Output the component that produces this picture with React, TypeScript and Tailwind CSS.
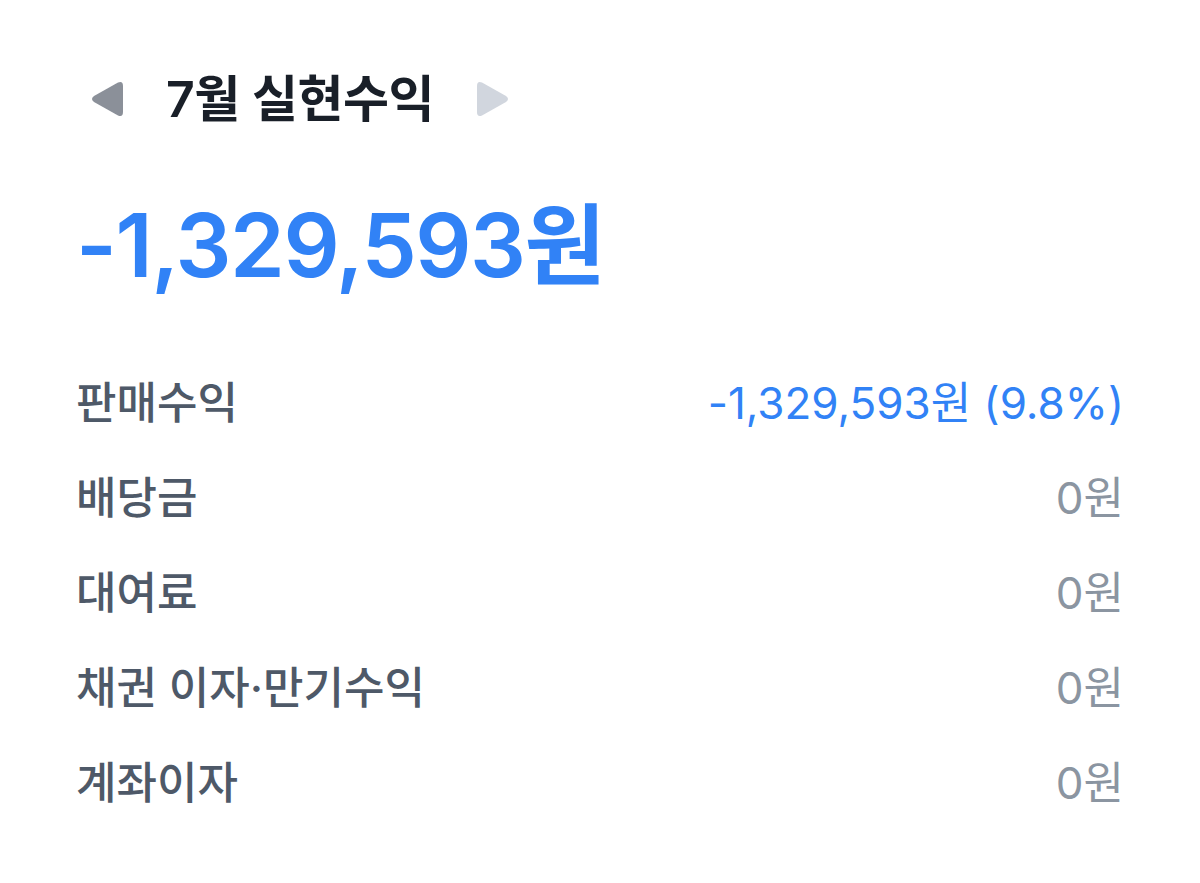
import { ReactNode } from "react";

const font = { fontFamily: '"Inter", "Noto Sans CJK KR", sans-serif' };

type Row = { label: string; value: ReactNode; accent?: boolean };

const rows: Row[] = [
  { label: "판매수익", value: "-1,329,593원 (9.8%)", accent: true },
  { label: "배당금", value: "0원" },
  { label: "대여료", value: "0원" },
  { label: "채권 이자·만기수익", value: "0원" },
  { label: "계좌이자", value: "0원" },
];

function Arrow({ dir, color }: { dir: "left" | "right"; color: string }) {
  return (
    <svg width="34" height="38" viewBox="0 0 34 38" className="shrink-0">
      {dir === "left" ? (
        <path d="M28 2.5 Q33 0.5 33 6 L33 32 Q33 37.5 28 35.5 L4 22 Q0 19 4 16 Z" fill={color} />
      ) : (
        <path d="M6 2.5 Q1 0.5 1 6 L1 32 Q1 37.5 6 35.5 L30 22 Q34 19 30 16 Z" fill={color} />
      )}
    </svg>
  );
}

export default function App() {
  return (
    <div className="min-h-[883px] w-[1200px] bg-white px-[76px] pt-[74px]" style={font}>
      <div className="flex items-center">
        <div className="ml-[14px]"><Arrow dir="left" color="#8b9099" /></div>
        <h1 className="ml-[42px] text-[50px] font-semibold leading-none tracking-[-0.5px] text-[#191f28]">7월 실현수익</h1>
        <div className="ml-[42px]"><Arrow dir="right" color="#d1d6de" /></div>
      </div>

      <div className="mt-[77px] text-[88px] font-semibold leading-none tracking-[-1.5px] text-[#3182f6]">
        -1,329,593원
      </div>

      <div className="mt-[66px] flex flex-col">
        {rows.map((r) => (
          <div key={r.label} className="flex h-[95px] items-center justify-between">
            <span className="text-[44px] font-medium text-[#4e5968]">{r.label}</span>
            <span className={`text-[44px] ${r.accent ? "text-[#3182f6]" : "text-[#8b95a1]"}`}>{r.value}</span>
          </div>
        ))}
      </div>
    </div>
  );
}
